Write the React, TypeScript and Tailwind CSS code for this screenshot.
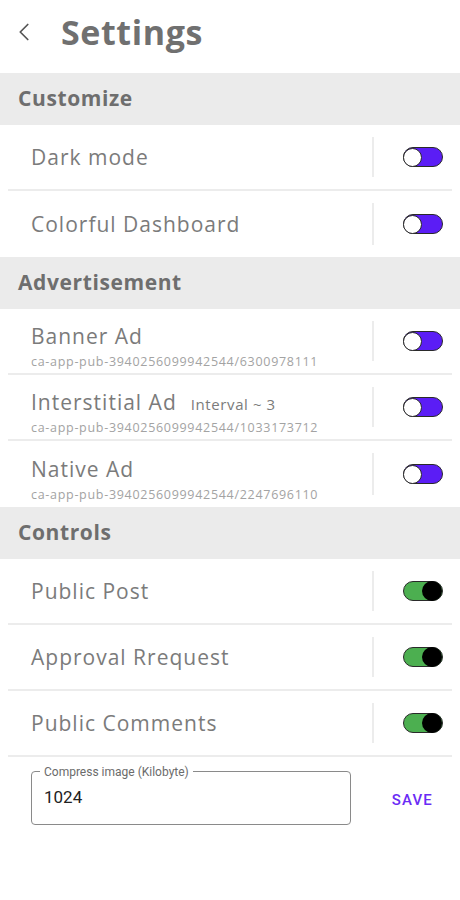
import { ChevronLeft } from "lucide-react";

type Row = {
  title: string;
  sub?: string;
  extra?: string;
  on?: boolean;
};

const sections: { name: string; rows: Row[] }[] = [
  {
    name: "Customize",
    rows: [{ title: "Dark mode" }, { title: "Colorful Dashboard" }],
  },
  {
    name: "Advertisement",
    rows: [
      { title: "Banner Ad", sub: "ca-app-pub-3940256099942544/6300978111" },
      {
        title: "Interstitial Ad",
        extra: "Interval ~ 3",
        sub: "ca-app-pub-3940256099942544/1033173712",
      },
      { title: "Native Ad", sub: "ca-app-pub-3940256099942544/2247696110" },
    ],
  },
  {
    name: "Controls",
    rows: [
      { title: "Public Post", on: true },
      { title: "Approval Rrequest", on: true },
      { title: "Public Comments", on: true },
    ],
  },
];

const Toggle = ({ on }: { on?: boolean }) => {
  if (on) {
    return (
      <div className="w-[40px] h-[20px] rounded-full border-[1.5px] border-[#2a2a2a] bg-[#4caf50] flex justify-end items-center">
        <div className="w-[20px] h-[20px] rounded-full bg-black" />
      </div>
    );
  }
  return (
    <div className="w-[40px] h-[20px] rounded-full border-[1.5px] border-[#2a2a2a] bg-[#5b1df5] flex items-center">
      <div className="w-[19px] h-[19px] -ml-[1px] rounded-full bg-white border-[1.5px] border-[#2a2a2a]" />
    </div>
  );
};

const SettingRow = ({ row, last }: { row: Row; last: boolean }) => (
  <div className="px-2">
    <div className={`flex items-center h-[66px] ${last ? "" : "border-b-2 border-[#ececec]"}`}>
      <div className={`flex-1 pl-[23px] min-w-0 ${row.sub ? "pt-[10px]" : ""}`}>
        <div className="flex items-baseline gap-[14px]">
          <span className="text-[21px] text-[#7b7b7b] leading-[28px] tracking-[1px]">{row.title}</span>
          {row.extra && (
            <span className="text-[15px] text-[#7b7b7b] tracking-[0.6px]">{row.extra}</span>
          )}
        </div>
        {row.sub && (
          <div className="text-[12.5px] text-[#a3a3a3] leading-[16px] mt-[4px] tracking-[0.7px]">
            {row.sub}
          </div>
        )}
      </div>
      <div className="self-stretch py-[12px]">
        <div className="w-[2px] h-full bg-[#ececec]" />
      </div>
      <div className="w-[78px] flex justify-end pr-[9px]">
        <Toggle on={row.on} />
      </div>
    </div>
  </div>
);

export default function App() {
  return (
    <div
      className="w-[460px] h-[900px] bg-white"
      style={{ fontFamily: '"Open Sans", "Liberation Sans", sans-serif' }}
    >
      <div className="h-[73px] flex items-center pl-[9px] pb-[9px]">
        <ChevronLeft className="w-[30px] h-[30px] text-[#555]" strokeWidth={1.4} />
        <h1 className="ml-[22px] text-[34px] font-bold text-[#707070] tracking-[0.6px]">
          Settings
        </h1>
      </div>
      {sections.map((s, si) => (
        <div key={s.name}>
          <div className="h-[52px] bg-[#ebebeb] flex items-center pl-[18px]">
            <span className="text-[21px] font-bold text-[#6e6e6e] tracking-[0.6px]">{s.name}</span>
          </div>
          {s.rows.map((r, i) => (
            <SettingRow
              key={r.title}
              row={r}
              last={i === s.rows.length - 1 && si < sections.length - 1}
            />
          ))}
        </div>
      ))}
      <div className="flex items-center pl-[31px] pr-[27px] mt-[14px]">
        <div
          className="relative w-[320px] h-[54px] border border-[#8a8a8a] rounded-[4px] flex items-center pl-[12px]"
          style={{ fontFamily: "Roboto, sans-serif" }}
        >
          <span className="absolute -top-[9px] left-[8px] bg-white px-[4px] text-[12px] text-[#6b6b6b]">
            Compress image (Kilobyte)
          </span>
          <span className="text-[17px] text-[#222]">1024</span>
        </div>
        <span
          className="ml-auto mt-[4px] text-[15px] font-medium text-[#6a2cf5] tracking-[1.2px]"
          style={{ fontFamily: "Roboto, sans-serif" }}
        >
          SAVE
        </span>
      </div>
    </div>
  );
}
